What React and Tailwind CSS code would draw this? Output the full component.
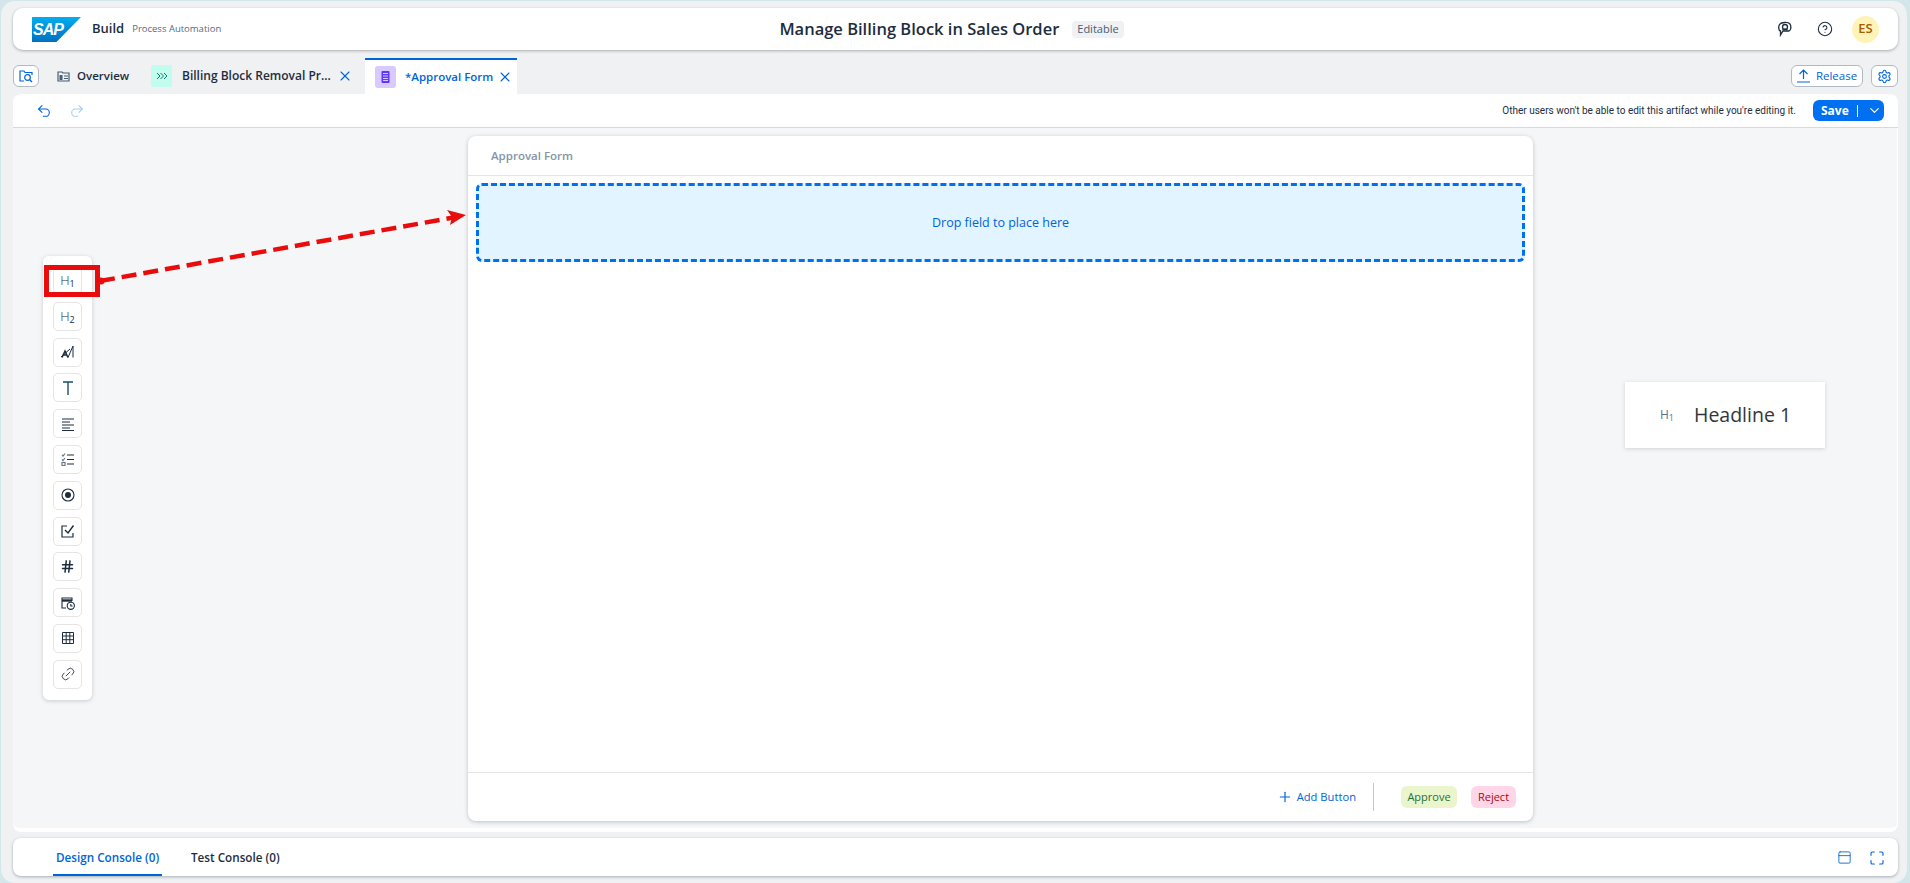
import React from 'react';
import { Undo2, Redo2, X, Plus, Settings, ChevronDown, CircleHelp, Hash, Link2, Maximize, PanelTop } from 'lucide-react';

const font = { fontFamily: '"Open Sans", "Noto Sans", sans-serif' };

const Sub = ({ n }) => (
  <span className="flex items-end text-[#1d2d3e] text-[13px] leading-none font-light">H<span className="text-[9px] font-normal translate-y-[1px]">{n}</span></span>
);

const paletteIcons = [
  <Sub n="1" />,
  <Sub n="2" />,
  <svg width="15" height="14" viewBox="0 0 15 14" fill="none" stroke="#1d2d3e"><path d="M8 12.5 L13 1 V12.5" /><path d="M1 12 L10 4" /><path d="M2 12.5 L5 6 L8 12.5 M3 10 H7" strokeWidth="1.5" /></svg>,
  <svg width="14" height="16" viewBox="0 0 14 16" fill="none" stroke="#1d4e70" strokeWidth="1.4"><path d="M2 2 H12 M7 2 V15" /></svg>,
  <svg width="14" height="14" viewBox="0 0 14 14" fill="none" stroke="#1d2d3e" strokeWidth="1.2"><path d="M1 2 H13 M1 5 H9 M1 8 H13 M1 11 H9 M1 13.5 H13" /></svg>,
  <svg width="14" height="14" viewBox="0 0 14 14" fill="none" stroke="#1d2d3e" strokeWidth="1.2"><path d="M6 3 H13 M6 7.5 H13 M6 12 H13" /><path d="M1 3 L2 4 L4 1.5" stroke="#6a7a8a" /><path d="M1 7.5 L2 8.5 L4 6" stroke="#6a7a8a" /><rect x="1" y="10.5" width="3" height="3" stroke="#6a7a8a" /></svg>,
  <svg width="14" height="14" viewBox="0 0 14 14" fill="none"><circle cx="7" cy="7" r="6" stroke="#1d2d3e" strokeWidth="1.1" /><circle cx="7" cy="7" r="3" fill="#1d2d3e" /></svg>,
  <svg width="14" height="14" viewBox="0 0 14 14" fill="none" stroke="#1d2d3e" strokeWidth="1.2"><path d="M10 13 H1 V2 H6 M12 9 V13 H10" /><path d="M4 6 L7 9 L12.5 1.5" strokeWidth="1.4" /></svg>,
  <Hash size={15} color="#1d2d3e" strokeWidth={2.4} />,
  <svg width="14" height="14" viewBox="0 0 14 14" fill="none" stroke="#1d2d3e" strokeWidth="1.1"><path d="M5 12 H1 V2 H11 V5" /><path d="M1 4.5 H11" strokeWidth="2.4" /><circle cx="9.8" cy="9.8" r="3.6" /><path d="M9.8 8 V10 H11.6" /></svg>,
  <svg width="14" height="14" viewBox="0 0 14 14" fill="none" stroke="#1d2d3e" strokeWidth="1"><path d="M1.5 1.5 H12.5 V12.5 H1.5Z M1.5 5 H12.5 M1.5 8.7 H12.5 M5.2 1.5 V12.5 M8.8 1.5 V12.5" /></svg>,
  <Link2 size={16} color="#1d2d3e" strokeWidth={1.2} className="-rotate-45" />,
];

const TabClose = () => <X size={16} color="#0064d9" strokeWidth={1.6} />;

function Header() {
  return (
    <header className="h-[42px] bg-white rounded-[10px] shadow-[0_1px_3px_rgba(60,75,90,0.4)] grid grid-cols-[1fr_auto_1fr] items-center pl-[19px] pr-[19px] shrink-0">
      <div className="flex items-center">
        <svg width="49" height="25" viewBox="0 0 49 25" className="shrink-0">
          <defs>
            <linearGradient id="sapLogo" x1="0" y1="0" x2="0" y2="1">
              <stop offset="0" stopColor="#00aeef" />
              <stop offset="1" stopColor="#0070c0" />
            </linearGradient>
          </defs>
          <polygon points="0,0 49,0 24.5,25 0,25" fill="url(#sapLogo)" />
          <text x="1" y="18" fontSize="16" fontWeight="800" fontStyle="italic" fill="#fff" fontFamily="Liberation Sans, sans-serif" textLength="31">SAP</text>
        </svg>
        <span className="ml-[11px] text-[13px] font-semibold text-[#1d2d3e]">Build</span>
        <span className="ml-[8px] text-[9.5px] text-[#556b82]">Process Automation</span>
      </div>
      <div className="flex items-center gap-[13px] -ml-[8px]">
        <span className="text-[16.5px] font-semibold text-[#1d2d3e]">Manage Billing Block in Sales Order</span>
        <span className="h-[17px] px-[5px] rounded-[4px] bg-[#eff1f2] text-[11px] text-[#475e75] flex items-center">Editable</span>
      </div>
      <div className="flex items-center justify-end">
        <svg width="16" height="16" viewBox="0 0 16 16" fill="none" stroke="#1d2d3e" strokeWidth="1.3" className="mr-[25px]">
          <circle cx="9" cy="6" r="2.5" /><path d="M4 3 C5 1.5 12 0.5 14 3 C15.5 6 15 9 13 10 H7 L4.5 14 V10 C2.5 10 2 5 4 3Z" /><path d="M6.5 9 C7.5 8 10.5 8 11.5 9" />
        </svg>
        <CircleHelp size={16} color="#1d2d3e" strokeWidth={1.6} className="mr-[19px]" />
        <div className="w-[27px] h-[27px] rounded-full bg-[#fff3b8] text-[#a45d00] text-[13px] font-semibold flex items-center justify-center">ES</div>
      </div>
    </header>
  );
}

function Tabs() {
  return (
    <div className="h-[44px] pt-[8px] flex items-stretch shrink-0">
      <div className="flex items-center">
        <div className="w-[26px] h-[22px] rounded-[6px] bg-white border border-[#b0bac4] flex items-center justify-center">
          <svg width="14" height="14" viewBox="0 0 14 14" fill="none" stroke="#0064d9" strokeWidth="1.2"><path d="M5 12 H1 V2 H5 L6 3.5 H13 V6" /><circle cx="8.5" cy="8.5" r="2.8" /><path d="M10.5 10.5 L13 13" /></svg>
        </div>
        <svg width="13" height="11" viewBox="0 0 13 11" fill="none" stroke="#475e75" strokeWidth="1.2" className="ml-[18px]"><path d="M1 1 H5 L6 2 H12 V10 H1Z" /><path d="M7 5 H11 M7 7.5 H11" /><rect x="2.5" y="4" width="3" height="5" fill="#475e75" stroke="none" /></svg>
        <span className="ml-[7px] w-[50px] text-[11.5px] font-semibold text-[#1d2d3e]">Overview</span>
        <div className="ml-[24px] w-[21px] h-[22px] rounded-[2px] bg-[#c2fcee] flex items-center justify-center">
          <svg width="12" height="8" viewBox="0 0 12 8" fill="none" stroke="#0f7d6c" strokeWidth="1"><path d="M1 1 L4 4 L1 7 M4.5 1 L7.5 4 L4.5 7 M8 1 L11 4 L8 7" /></svg>
        </div>
        <span className="ml-[10px] w-[146px] text-[12px] font-semibold text-[#1d2d3e] whitespace-nowrap">Billing Block Removal Pr...</span>
        <span className="ml-[9px]"><TabClose /></span>
      </div>
      <div className="ml-[12px] w-[152px] bg-white border-t-2 border-[#0064d9] flex items-center pl-[10px]">
        <div className="w-[21px] h-[22px] rounded-[3px] bg-[#d8caff] flex items-center justify-center">
          <svg width="9" height="12" viewBox="0 0 9 12" fill="#5d36ff"><path d="M0.5 1 Q0.5 0 1.5 0 H7.5 Q8.5 0 8.5 1 V11 Q8.5 12 7.5 12 H1.5 Q0.5 12 0.5 11Z M2 2 V3 H7 V2Z M2 4.5 V5.5 H7 V4.5Z M2 7 V8 H7 V7Z M2 9 V10 H7 V9Z" fillRule="evenodd" /></svg>
        </div>
        <span className="ml-[9px] w-[88px] text-[11.5px] font-semibold text-[#0064d9] whitespace-nowrap">*Approval Form</span>
        <span className="ml-[4px]"><TabClose /></span>
      </div>
      <div className="flex-1 flex items-center justify-end gap-[8px]">
        <div className="h-[22px] w-[72px] rounded-[6px] bg-white border border-[#b0bac4] flex items-center justify-center gap-[6px] text-[11.5px] text-[#0064d9]">
          <svg width="13" height="14" viewBox="0 0 13 14" fill="none" stroke="#0064d9" strokeWidth="1.2"><path d="M6.5 10 V1 M2.5 5 L6.5 1 L10.5 5 M0 13 H13" /></svg>
          Release
        </div>
        <div className="h-[22px] w-[27px] rounded-[6px] bg-white border border-[#b0bac4] flex items-center justify-center">
          <Settings size={15} color="#0064d9" strokeWidth={1.7} />
        </div>
      </div>
    </div>
  );
}

function Toolbar() {
  return (
    <div className="h-[34px] bg-white border-b border-[#d9d9d9] rounded-t-[8px] flex items-center pl-[23px] pr-[14px] shrink-0">
      <Undo2 size={16} color="#0064d9" strokeWidth={1.6} />
      <Redo2 size={16} color="#a6cdf5" strokeWidth={1.6} className="ml-[17px]" />
      <span className="ml-auto text-[10px] font-['Roboto'] text-[#1d2d3e] whitespace-nowrap">Other users won't be able to edit this artifact while you're editing it.</span>
      <div className="ml-[17px] w-[71px] h-[21px] rounded-[6px] bg-[#0070f2] flex items-center text-white">
        <span className="pl-[8px] text-[12px] font-bold">Save</span>
        <span className="ml-[8px] w-px h-[12px] bg-white" />
        <ChevronDown size={15} strokeWidth={1.9} className="ml-[9px]" />
      </div>
    </div>
  );
}

function Palette() {
  return (
    <aside className="w-[49px] h-[444px] self-center shrink-0 bg-white rounded-[6px] shadow-[0_1px_4px_rgba(60,75,90,0.25)] flex flex-col items-center gap-[6.8px] pt-[10px] relative">
      {paletteIcons.map((icon, i) => (
        <div key={i} className="w-[29px] h-[29px] rounded-[5px] border border-[#e5e5e5] bg-white flex items-center justify-center">
          {icon}
        </div>
      ))}
      {/* red marker around first item */}
      <div className="absolute left-[1px] top-[9px] w-[56px] h-[32px] border-[5px] border-[#e80c0c]" />
    </aside>
  );
}

function FormCard() {
  return (
    <section className="w-[1065px] shrink-0 bg-white rounded-[8px] shadow-[0_1px_4px_rgba(60,75,90,0.3)] flex flex-col mt-[8px] mb-[7px] ml-[376px]">
      <div className="h-[40px] border-b border-[#e5e5e5] flex items-center pl-[23px] text-[11.5px] font-semibold text-[#8396a8]">Approval Form</div>
      <div className="flex-1 pt-[7px] px-[8px]">
        <div className="h-[79px] rounded-[6px] border-[3px] border-dashed border-[#0070f2] bg-[#e1f4ff] flex items-center justify-center text-[12.5px] text-[#0064d9] pt-[1px]">Drop field to place here</div>
      </div>
      <div className="h-[49px] border-t border-[#e5e5e5] flex items-center justify-end pr-[17px]">
        <Plus size={16} color="#0064d9" strokeWidth={1.8} />
        <span className="ml-[4px] text-[11.2px] text-[#0064d9]">Add Button</span>
        <span className="ml-[17px] w-px h-[28px] bg-[#c4c8cc]" />
        <span className="ml-[27px] h-[22px] w-[56px] rounded-[6px] bg-[#ebf5cb] text-[11px] text-[#256f3a] flex items-center justify-center">Approve</span>
        <span className="ml-[14px] h-[22px] w-[45px] rounded-[6px] bg-[#ffd6e8] text-[11px] text-[#aa0808] flex items-center justify-center">Reject</span>
      </div>
    </section>
  );
}

function DragGhost() {
  return (
    <div className="ml-[92px] mt-[254px] self-start w-[200px] h-[66px] shrink-0 bg-white shadow-[0_1px_4px_rgba(60,75,90,0.2)] flex items-center pl-[35px]">
      <span className="flex items-end text-[#5b738b] text-[12px] leading-none">H<span className="text-[9px] translate-y-[1px]">1</span></span>
      <span className="ml-[20px] text-[19.5px] text-[#32363a]">Headline 1</span>
    </div>
  );
}

function Console() {
  return (
    <div className="mt-[6px] h-[38px] bg-white rounded-[8px] shadow-[0_1px_3px_rgba(60,75,90,0.4)] flex items-stretch pl-[40px] pr-[13px] shrink-0">
      <div className="px-[3px] pt-[3px] w-[109px] border-b-2 border-[#0064d9] flex items-center text-[11.7px] font-semibold text-[#0064d9] whitespace-nowrap">Design Console (0)</div>
      <div className="ml-[29px] pt-[1px] flex items-center text-[11.7px] font-semibold text-[#1d2d3e] whitespace-nowrap">Test Console (0)</div>
      <div className="ml-auto pt-[1px] flex items-center gap-[17px]">
        <PanelTop size={15} color="#0064d9" strokeWidth={1.4} />
        <Maximize size={16} color="#0064d9" strokeWidth={1.7} />
      </div>
    </div>
  );
}

export default function App() {
  return (
    <div className="w-[1910px] h-[883px] overflow-hidden bg-[#d3e6ea]" style={font}>
      <div className="w-[1906px] h-[882px] mt-px ml-[1px] rounded-[14px] bg-[#eff1f2] pt-[7px] pl-[12px] pr-[9px] pb-[7px] flex flex-col relative">
        <Header />
        <Tabs />
        <Toolbar />
        <main className="flex-1 min-h-0 bg-[#f5f6f7] border-r border-b-4 border-white rounded-b-[8px] flex items-stretch pl-[30px]">
          <Palette />
          <FormCard />
          <DragGhost />
        </main>
        <Console />
        {/* red arrow from palette item to drop zone */}
        <svg className="absolute left-0 top-0 pointer-events-none" width="600" height="320" fill="none">
          <path d="M99 280 L455 216" stroke="#e80c0c" strokeWidth="4.5" strokeDasharray="15 7" />
          <path d="M465 214 L446 209 L451 216 L449 224 Z" fill="#e80c0c" />
          <circle cx="100" cy="280" r="3.5" fill="#e80c0c" />
        </svg>
      </div>
    </div>
  );
}
